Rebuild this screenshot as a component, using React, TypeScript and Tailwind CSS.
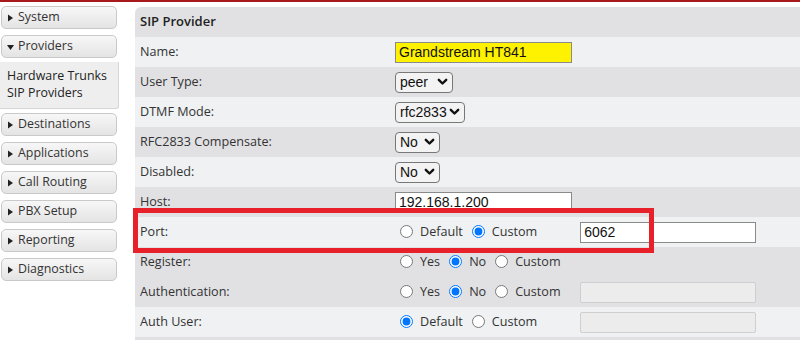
import { ReactNode } from "react";

const menu = ["System", "Providers", "Destinations", "Applications", "Call Routing", "PBX Setup", "Reporting", "Diagnostics"];

const Arrow = ({ down }: { down?: boolean }) => (
    <svg width="7" height="8" viewBox="0 0 7 8" className="mr-[4px] shrink-0">
        {down ? <path d="M0 2 L7 2 L3.5 7 Z" fill="#222" /> : <path d="M1 0.5 L6 4 L1 7.5 Z" fill="#222" />}
    </svg>
);

const MenuButton = ({ label, open }: { label: string; open?: boolean }) => (
    <div className="flex items-center h-[23px] w-[116px] ml-[1px] pl-[5px] rounded-[5px] border border-[#c9c9c9] bg-gradient-to-b from-[#f7f7f7] to-[#e4e4e4] text-[12.4px] text-[#333]">
        <Arrow down={open} />
        {label}
    </div>
);

const Chevron = () => (
    <svg width="11" height="8" viewBox="0 0 11 8" className="ml-auto">
        <path d="M1.8 1.8 L5.5 5.5 L9.2 1.8" stroke="#111" strokeWidth="2.4" fill="none" strokeLinecap="round" strokeLinejoin="round" />
    </svg>
);

const Select = ({ value, w }: { value: string; w: string }) => (
    <div className={`flex items-center h-[21px] ${w} pl-[4px] pr-[4px] rounded-[4px] border border-[#777] bg-[#f3f3f3] text-[14px] text-[#111] font-['Liberation_Sans',Arial,sans-serif]`}>
        {value}
        <Chevron />
    </div>
);

const TextBox = ({ value, yellow, disabled, w = "w-[177px]" }: { value?: string; yellow?: boolean; disabled?: boolean; w?: string }) => (
    <div className={`flex items-center h-[21px] ${w} px-[3px] border text-[14px] text-[#111] font-['Liberation_Sans',Arial,sans-serif] ${yellow ? 'bg-[#fff200] border-[#8a8a8a]' : disabled ? 'bg-[#ececec] border-[#cfcfcf] rounded-[2px]' : 'bg-white border-[#8a8a8a]'}`}>
        {value}
    </div>
);

const Radio = ({ label, checked }: { label: string; checked?: boolean }) => (
    <label className="flex items-center mr-[4px]">
        <input type="radio" readOnly checked={!!checked} className="w-[13px] h-[13px] m-0 mr-[7px] ml-[5px] accent-[#0075ff]" />
        <span className="text-[12.6px] text-[#333]">{label}</span>
    </label>
);

const Row = ({ label, dark, children }: { label: string; dark?: boolean; children?: ReactNode }) => (
    <div className={`flex items-center h-[30px] ${dark ? 'bg-[#e1e1e3]' : 'bg-[#eff1f2]'}`}>
        <div className="w-[260px] pl-[5px] text-[12.6px] text-[#333]">{label}</div>
        <div className="flex items-center">{children}</div>
    </div>
);

export default function App() {
    return (
        <div className="relative w-[800px] h-[340px] overflow-hidden bg-white border-t-[2px] border-[#a8191b] font-['Open_Sans',sans-serif]">
            <div className="flex">
                <div className="w-[120px] pt-[4px] flex flex-col">
                    <MenuButton label={menu[0]} />
                    <div className="mt-[6px]"><MenuButton label={menu[1]} open /></div>
                    <div className="mt-[4px] h-[47px] w-[119px] bg-[#eeeeee] border-b border-r border-[#d6d6d6] rounded-br-[3px] pl-[7px] pt-[5px] text-[12.4px] leading-[17px] text-[#222]">
                        <div>Hardware Trunks</div>
                        <div>SIP Providers</div>
                    </div>
                    <div className="mt-[4px]"><MenuButton label={menu[2]} /></div>
                    {menu.slice(3).map((m) => (
                        <div key={m} className="mt-[6px]"><MenuButton label={m} /></div>
                    ))}
                </div>

                <div className="ml-[15px] mt-[5px] flex-1">
                    <div className="h-[30px] flex items-center pl-[5px] bg-[#e1e1e3] rounded-tl-[6px] text-[13px] font-semibold text-[#222]">SIP Provider</div>
                    <Row label="Name:"><TextBox value="Grandstream HT841" yellow /></Row>
                    <Row label="User Type:" dark><Select value="peer" w="w-[58px]" /></Row>
                    <Row label="DTMF Mode:"><Select value="rfc2833" w="w-[70px]" /></Row>
                    <Row label="RFC2833 Compensate:" dark><Select value="No" w="w-[45px]" /></Row>
                    <Row label="Disabled:"><Select value="No" w="w-[45px]" /></Row>
                    <Row label="Host:" dark><TextBox value="192.168.1.200" /></Row>
                    <Row label="Port:">
                        <Radio label="Default" />
                        <Radio label="Custom" checked />
                        <div className="ml-[39px]"><TextBox value="6062" w="w-[176px]" /></div>
                    </Row>
                    <Row label="Register:" dark>
                        <Radio label="Yes" />
                        <Radio label="No" checked />
                        <Radio label="Custom" />
                    </Row>
                    <Row label="Authentication:" dark>
                        <Radio label="Yes" />
                        <Radio label="No" checked />
                        <Radio label="Custom" />
                        <div className="ml-[15px]"><TextBox disabled w="w-[176px]" /></div>
                    </Row>
                    <Row label="Auth User:">
                        <Radio label="Default" checked />
                        <Radio label="Custom" />
                        <div className="ml-[39px]"><TextBox disabled w="w-[176px]" /></div>
                    </Row>
                    <div className="h-[30px] bg-[#e1e1e3]" />
                </div>
            </div>
            <div className="absolute left-[133px] top-[206px] w-[521px] h-[45px] border-[5px] border-[#e8202a]" />
        </div>
    );
}
